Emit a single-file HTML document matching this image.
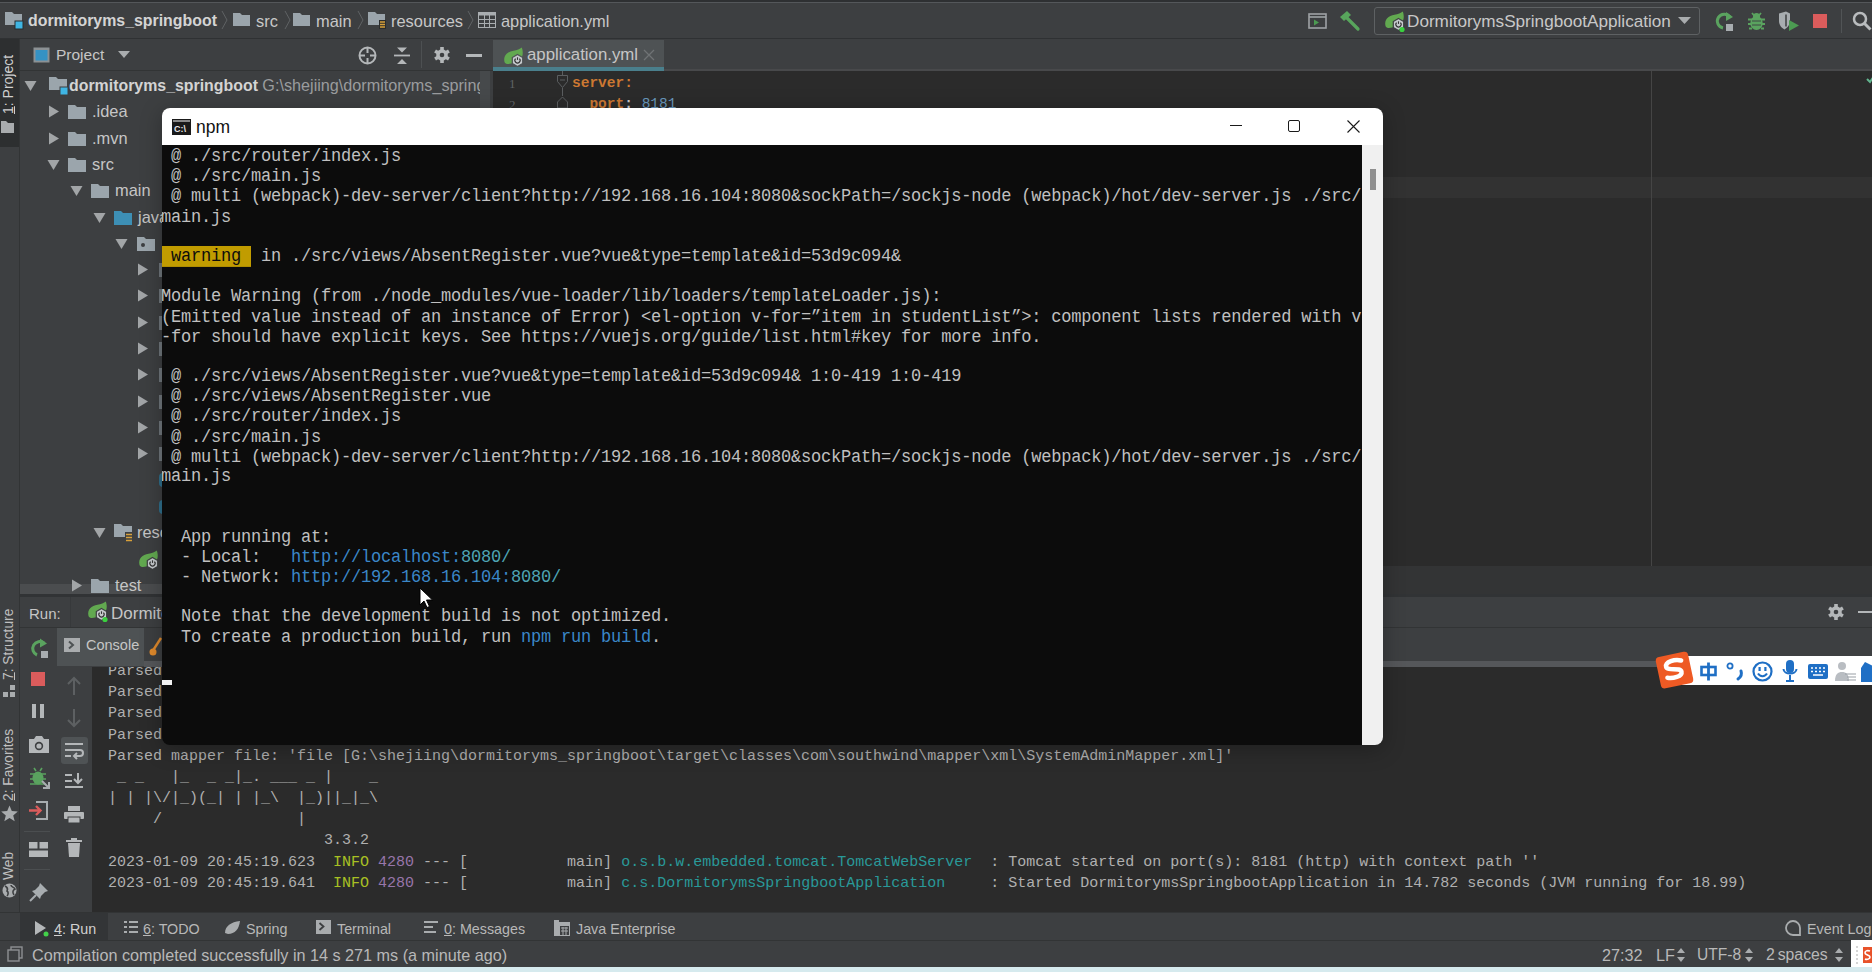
<!DOCTYPE html>
<html><head><meta charset="utf-8">
<style>
*{margin:0;padding:0;box-sizing:border-box}
html,body{width:1872px;height:972px;overflow:hidden;background:#3d3f41;font-family:"Liberation Sans",sans-serif;color:#bbbbbb}
.a{position:absolute}
.ui{font-size:16.4px;white-space:pre;line-height:1}
.mono{font-family:"Liberation Mono",monospace;white-space:pre}
svg{position:absolute;overflow:visible}
.wb{background:#c19c00;color:#0c0c0c}
.lb{color:#3b87c8}
.lc{color:#4ea4b4}
</style></head><body>
<!-- top strip -->
<div class="a" style="left:0;top:0;width:1872px;height:2px;background:#2e3032"></div>
<div class="a" style="left:0;top:2px;width:1872px;height:1px;background:#54575a"></div>
<!-- nav bar -->
<div class="a" id="nav" style="left:0;top:3px;width:1872px;height:35px;background:#3d3f41"></div>
<div class="a" style="left:0;top:38px;width:1872px;height:1px;background:#2f3133"></div>
<!-- breadcrumb -->
<svg style="left:5px;top:12px" width="20" height="18"><path d="M0 0h7l2 2h8v11H0z" fill="#9ba5ac"/><rect x="10" y="9" width="8" height="8" fill="#3fb5e3" stroke="#2b2d2e" stroke-width="1"/></svg>
<div class="a ui" style="left:28px;top:13px;font-weight:bold;font-size:15.9px;color:#d4d4d4">dormitoryms_springboot</div>
<svg style="left:221px;top:10px" width="8" height="20"><path d="M1 1l5 9l-5 9" fill="none" stroke="#5f6264" stroke-width="1"/></svg>
<svg style="left:233px;top:13px" width="18" height="14"><path d="M0 0h7l2 2h8v11H0z" fill="#9ba5ac"/></svg>
<div class="a ui" style="left:256px;top:13px;color:#c8c8c8">src</div>
<svg style="left:284px;top:10px" width="8" height="20"><path d="M1 1l5 9l-5 9" fill="none" stroke="#5f6264" stroke-width="1"/></svg>
<svg style="left:293px;top:13px" width="18" height="14"><path d="M0 0h7l2 2h8v11H0z" fill="#9ba5ac"/></svg>
<div class="a ui" style="left:316px;top:13px;color:#c8c8c8">main</div>
<svg style="left:357px;top:10px" width="8" height="20"><path d="M1 1l5 9l-5 9" fill="none" stroke="#5f6264" stroke-width="1"/></svg>
<svg style="left:368px;top:12px" width="20" height="18"><path d="M0 0h7l2 2h8v11H0z" fill="#9ba5ac"/><rect x="11" y="8" width="7" height="9" fill="#2b2d2e"/><path d="M12 10h5M12 12.5h5M12 15h5" stroke="#d8a03a" stroke-width="1.5"/></svg>
<div class="a ui" style="left:391px;top:13px;color:#c8c8c8">resources</div>
<svg style="left:467px;top:10px" width="8" height="20"><path d="M1 1l5 9l-5 9" fill="none" stroke="#5f6264" stroke-width="1"/></svg>
<svg style="left:478px;top:12px" width="19" height="16"><rect x="0.5" y="0.5" width="17" height="15" fill="none" stroke="#a9adb0"/><rect x="0.5" y="0.5" width="17" height="3" fill="#a9adb0"/><path d="M0 7.5h18M0 11.5h18M6.5 0v16M11.5 0v16" stroke="#a9adb0"/></svg>
<div class="a ui" style="left:501px;top:13px;color:#c8c8c8">application.yml</div>
<!-- right toolbar -->
<svg style="left:1308px;top:13px" width="19" height="16"><rect x="1" y="1" width="17" height="14" fill="none" stroke="#9ea2a5" stroke-width="1.6"/><path d="M1 4h17" stroke="#9ea2a5" stroke-width="1.6"/><path d="M6 6.5v6l5-3z" fill="#4c9b52"/></svg>
<svg style="left:1339px;top:10px" width="22" height="22"><path d="M1 7l7-6l4 4l-7 6z" fill="#58a55c"/><path d="M8 8l11 11" stroke="#58a55c" stroke-width="3.2" stroke-linecap="round"/></svg>
<div class="a" style="left:1374px;top:7px;width:326px;height:28px;border:1px solid #5e6163;border-radius:3px;background:#3d3f41"></div>
<svg style="left:1384px;top:11px" width="23" height="21"><path d="M1.5 15C0 8.5 4.5 4.5 10.5 3.8C14 3.4 17 2 18.8 0.5C20.5 5 20 10 17 12.5C14 15 9 16.5 5 17C3.5 17 2 16.5 1.5 15z" fill="#62a950"/><path d="M14.5 7.5l5.2 3v6l-5.2 3l-5.2-3v-6z" fill="#c5c9cc" stroke="#3d3f41" stroke-width="1.2"/><path d="M12.6 11.6a2.6 2.6 0 1 0 3.8 0" fill="none" stroke="#333" stroke-width="1.1"/><path d="M14.5 10.3v2.6" stroke="#333" stroke-width="1.1"/><circle cx="18" cy="18.5" r="2.6" fill="#3ad13f"/></svg>
<div class="a ui" style="left:1407px;top:13px;font-size:17.15px;color:#c8c8c8">DormitorymsSpringbootApplication</div>
<svg style="left:1678px;top:17px" width="14" height="8"><path d="M0 0h13l-6.5 7z" fill="#a9acae"/></svg>
<svg style="left:1714px;top:11px" width="22" height="22"><path d="M16 6A7 7 0 1 0 9 17" fill="none" stroke="#5aa35f" stroke-width="3"/><path d="M12 1l7 5l-7 4z" fill="#5aa35f"/><rect x="12" y="13" width="7" height="7" fill="#a8adb0"/></svg>
<svg style="left:1747px;top:11px" width="19" height="20"><path d="M5 2l2.5 3M14 2l-2.5 3M1 8.5h4M14 8.5h4M1 13h4M14 13h4M2 17.5h3M14 17.5h3" stroke="#5aa35f" stroke-width="1.8"/><ellipse cx="9.5" cy="12" rx="6.2" ry="7" fill="#5aa35f"/><circle cx="9.5" cy="5.5" r="3.5" fill="#5aa35f"/><path d="M5 10h9M5 14h9" stroke="#3d3f41" stroke-width="0.9"/></svg>
<svg style="left:1778px;top:11px" width="22" height="20"><path d="M1 2.5L8 0.5L12 2.5V10C12 14 9 17 6.5 18.5C3.5 17 1 14 1 10z" fill="#a8adb0"/><path d="M8 3.5v12" stroke="#3d3f41" stroke-width="1.5"/><path d="M11 9l10 5.5l-10 5.5z" fill="#4c9b52"/></svg>
<div class="a" style="left:1813px;top:14px;width:14px;height:14px;background:#db5c5c"></div>
<div class="a" style="left:1841px;top:9px;width:1px;height:24px;background:#515456"></div>
<svg style="left:1852px;top:11px" width="22" height="20"><circle cx="8" cy="8" r="6" fill="none" stroke="#b9bcbe" stroke-width="2.5"/><path d="M12.5 12.5l6 6" stroke="#b9bcbe" stroke-width="3"/></svg>

<!-- left stripe -->
<div class="a" style="left:0;top:39px;width:19px;height:873px;background:#3d3f41"></div>
<div class="a" style="left:0;top:39px;width:19px;height:108px;background:#2d2f30"></div>
<div class="a" style="left:19px;top:39px;width:1px;height:873px;background:#323435"></div>

<!-- project panel -->
<div class="a" style="left:20px;top:39px;width:473px;height:31px;background:#3d3f41"></div>
<div class="a" style="left:20px;top:70px;width:473px;height:1px;background:#323435"></div>
<div class="a" style="left:20px;top:71px;width:460px;height:513px;background:#3d3f41"></div>
<div class="a" style="left:20px;top:584px;width:473px;height:10px;background:#4b4d4f"></div>
<div class="a" style="left:20px;top:594px;width:1852px;height:3px;background:#313335"></div>
<!-- project header -->
<svg style="left:33px;top:47px" width="18" height="17"><rect x="0.5" y="0.5" width="16" height="15" fill="#8c9194"/><rect x="2.5" y="3" width="12" height="10.5" fill="#3592c4"/></svg>
<div class="a ui" style="left:56px;top:47px;font-size:15.5px;color:#c6c6c6">Project</div>
<svg style="left:118px;top:51px" width="14" height="8"><path d="M0 0h12l-6 7z" fill="#a9acae"/></svg>
<svg style="left:357px;top:45px" width="22" height="22"><circle cx="10.5" cy="10.5" r="8" fill="none" stroke="#b4b7b9" stroke-width="2"/><path d="M10.5 2v6M10.5 13v6M2 10.5h6M13 10.5h6" stroke="#b4b7b9" stroke-width="2"/></svg>
<svg style="left:392px;top:46px" width="20" height="20"><path d="M2 9.5h16" stroke="#b4b7b9" stroke-width="1.8"/><path d="M5 1.5h10l-5 5zM5 18h10l-5-5z" fill="#b4b7b9"/></svg>
<div class="a" style="left:421px;top:41px;width:1px;height:27px;background:#4d5052"></div>
<svg style="left:434px;top:47px" width="17" height="17"><g fill="#b4b7b9"><circle cx="8" cy="8" r="5.8"/><rect x="6.2" y="0" width="3.6" height="16"/><rect x="6.2" y="0" width="3.6" height="16" transform="rotate(60 8 8)"/><rect x="6.2" y="0" width="3.6" height="16" transform="rotate(120 8 8)"/></g><circle cx="8" cy="8" r="2.3" fill="#3d3f41"/></svg>
<div class="a" style="left:466px;top:54px;width:16px;height:3px;background:#b4b7b9"></div>
<!-- tree -->
<svg style="left:24px;top:80px" width="14" height="12"><path d="M0.5 1h12l-6 10z" fill="#a2a5a7"/></svg>
<svg style="left:49px;top:77px" width="22" height="20"><path d="M0 0h7l2 2h9v11H0z" fill="#9ba5ac"/><rect x="11" y="10" width="8" height="8" fill="#3fb5e3" stroke="#3d3f41" stroke-width="1"/></svg>
<div class="a ui" style="left:69px;top:77px;font-weight:bold;font-size:15.9px;color:#d4d4d4">dormitoryms_springboot <span style="font-weight:normal;font-size:16.2px;color:#9a9c9e">G:\shejiing\dormitoryms_springboot</span></div>
<svg style="left:48px;top:105px" width="12" height="14"><path d="M1 0.5v12l10-6z" fill="#a2a5a7"/></svg>
<svg style="left:68px;top:105px" width="20" height="16"><path d="M0 0h7l2 2h9v12H0z" fill="#9ba5ac"/></svg>
<div class="a ui" style="left:92px;top:103px;color:#c6c6c6">.idea</div>
<svg style="left:48px;top:132px" width="12" height="14"><path d="M1 0.5v12l10-6z" fill="#a2a5a7"/></svg>
<svg style="left:68px;top:132px" width="20" height="16"><path d="M0 0h7l2 2h9v12H0z" fill="#9ba5ac"/></svg>
<div class="a ui" style="left:92px;top:130px;color:#c6c6c6">.mvn</div>
<svg style="left:47px;top:159px" width="14" height="12"><path d="M0.5 1h12l-6 10z" fill="#a2a5a7"/></svg>
<svg style="left:68px;top:158px" width="20" height="16"><path d="M0 0h7l2 2h9v12H0z" fill="#9ba5ac"/></svg>
<div class="a ui" style="left:92px;top:156px;color:#c6c6c6">src</div>
<svg style="left:70px;top:185px" width="14" height="12"><path d="M0.5 1h12l-6 10z" fill="#a2a5a7"/></svg>
<svg style="left:91px;top:184px" width="20" height="16"><path d="M0 0h7l2 2h9v12H0z" fill="#9ba5ac"/></svg>
<div class="a ui" style="left:115px;top:182px;color:#c6c6c6">main</div>
<svg style="left:93px;top:212px" width="14" height="12"><path d="M0.5 1h12l-6 10z" fill="#a2a5a7"/></svg>
<svg style="left:114px;top:211px" width="20" height="16"><path d="M0 0h7l2 2h9v12H0z" fill="#3d8fb5"/></svg>
<div class="a ui" style="left:138px;top:209px;color:#c6c6c6">java</div>
<svg style="left:115px;top:238px" width="14" height="12"><path d="M0.5 1h12l-6 10z" fill="#a2a5a7"/></svg>
<svg style="left:137px;top:237px" width="20" height="16"><path d="M0 0h7l2 2h9v12H0z" fill="#9ba5ac"/><circle cx="6" cy="8" r="2" fill="#3d3f41"/></svg>
<svg style="left:137px;top:263px" width="12" height="14"><path d="M1 0.5v12l10-6z" fill="#a2a5a7"/></svg>
<div class="a" style="left:159px;top:263px;width:4px;height:14px;background:#6f767b"></div>
<svg style="left:137px;top:289px" width="12" height="14"><path d="M1 0.5v12l10-6z" fill="#a2a5a7"/></svg>
<div class="a" style="left:159px;top:289px;width:4px;height:14px;background:#6f767b"></div>
<svg style="left:137px;top:316px" width="12" height="14"><path d="M1 0.5v12l10-6z" fill="#a2a5a7"/></svg>
<div class="a" style="left:159px;top:316px;width:4px;height:14px;background:#6f767b"></div>
<svg style="left:137px;top:342px" width="12" height="14"><path d="M1 0.5v12l10-6z" fill="#a2a5a7"/></svg>
<div class="a" style="left:159px;top:342px;width:4px;height:14px;background:#6f767b"></div>
<svg style="left:137px;top:368px" width="12" height="14"><path d="M1 0.5v12l10-6z" fill="#a2a5a7"/></svg>
<div class="a" style="left:159px;top:368px;width:4px;height:14px;background:#6f767b"></div>
<svg style="left:137px;top:395px" width="12" height="14"><path d="M1 0.5v12l10-6z" fill="#a2a5a7"/></svg>
<div class="a" style="left:159px;top:395px;width:4px;height:14px;background:#6f767b"></div>
<svg style="left:137px;top:421px" width="12" height="14"><path d="M1 0.5v12l10-6z" fill="#a2a5a7"/></svg>
<div class="a" style="left:159px;top:421px;width:4px;height:14px;background:#6f767b"></div>
<svg style="left:137px;top:447px" width="12" height="14"><path d="M1 0.5v12l10-6z" fill="#a2a5a7"/></svg>
<div class="a" style="left:159px;top:447px;width:4px;height:14px;background:#6f767b"></div>
<div class="a" style="left:159px;top:473px;width:4px;height:14px;border-radius:7px 0 0 7px;background:#2f6f8c"></div>
<div class="a" style="left:159px;top:500px;width:4px;height:14px;border-radius:7px 0 0 7px;background:#2f6f8c"></div>
<svg style="left:93px;top:527px" width="14" height="12"><path d="M0.5 1h12l-6 10z" fill="#a2a5a7"/></svg>
<svg style="left:114px;top:524px" width="22" height="20"><path d="M0 0h7l2 2h9v11H0z" fill="#9ba5ac"/><rect x="11" y="8" width="8" height="11" fill="#3d3f41"/><path d="M12 10.5h6M12 13.5h6M12 16.5h6" stroke="#d8a03a" stroke-width="1.6"/></svg>
<div class="a ui" style="left:137px;top:524px;color:#c6c6c6">resources</div>
<svg style="left:138px;top:550px" width="23" height="21"><path d="M1.5 15C0 8.5 4.5 4.5 10.5 3.8C14 3.4 17 2 18.8 0.5C20.5 5 20 10 17 12.5C14 15 9 16.5 5 17C3.5 17 2 16.5 1.5 15z" fill="#62a950"/><path d="M14.5 7.5l5.2 3v6l-5.2 3l-5.2-3v-6z" fill="#c5c9cc" stroke="#3d3f41" stroke-width="1.2"/><path d="M12.6 11.6a2.6 2.6 0 1 0 3.8 0" fill="none" stroke="#333" stroke-width="1.1"/><path d="M14.5 10.3v2.6" stroke="#333" stroke-width="1.1"/></svg>
<svg style="left:71px;top:579px" width="12" height="14"><path d="M1 0.5v12l10-6z" fill="#a2a5a7"/></svg>
<svg style="left:91px;top:579px" width="20" height="16"><path d="M0 0h7l2 2h9v12H0z" fill="#9ba5ac"/></svg>
<div class="a ui" style="left:115px;top:577px;color:#c6c6c6">test</div>
<div class="a" style="left:480px;top:71px;width:13px;height:513px;background:#3d3f41"></div>
<div class="a" style="left:480px;top:71px;width:10px;height:513px;background:#46494b"></div>
<!-- editor -->
<div class="a" style="left:493px;top:39px;width:1379px;height:32px;background:#3d3f41"></div>
<div class="a" style="left:493px;top:40px;width:171px;height:31px;background:#4e5254"></div>
<div class="a" style="left:493px;top:67px;width:171px;height:4px;background:#4a7f8c"></div>
<div class="a" style="left:493px;top:71px;width:1379px;height:495px;background:#2b2b2b"></div>
<div class="a" style="left:493px;top:177px;width:1379px;height:21px;background:#323232"></div>
<div class="a" style="left:1651px;top:71px;width:1px;height:495px;background:#454545"></div>
<div class="a" style="left:493px;top:566px;width:1379px;height:28px;background:#333435"></div>

<div class="a" style="left:664px;top:69px;width:1208px;height:2px;background:#48494b"></div>
<svg style="left:1867px;top:75px" width="6" height="8"><path d="M0 4l3 3l4-6" fill="none" stroke="#62b58f" stroke-width="2"/></svg>
<!-- tab -->
<svg style="left:503px;top:47px" width="23" height="21"><path d="M1.5 15C0 8.5 4.5 4.5 10.5 3.8C14 3.4 17 2 18.8 0.5C20.5 5 20 10 17 12.5C14 15 9 16.5 5 17C3.5 17 2 16.5 1.5 15z" fill="#62a950"/><path d="M14.5 7.5l5.2 3v6l-5.2 3l-5.2-3v-6z" fill="#c5c9cc" stroke="#4e5254" stroke-width="1.2"/><path d="M12.6 11.6a2.6 2.6 0 1 0 3.8 0" fill="none" stroke="#333" stroke-width="1.1"/><path d="M14.5 10.3v2.6" stroke="#333" stroke-width="1.1"/></svg>
<div class="a ui" style="left:527px;top:47px;font-size:16.8px;color:#c6c6c6">application.yml</div>
<svg style="left:643px;top:49px" width="12" height="12"><path d="M1 1l10 10M11 1L1 11" stroke="#6f7375" stroke-width="1.3"/></svg>
<!-- editor content -->
<div class="a mono" style="left:509px;top:75px;font-family:'Liberation Serif',serif;font-size:13px;line-height:21px;color:#606366;margin-top:-2px">1
2</div>
<svg style="left:556px;top:71px" width="14" height="40"><path d="M6.5 0v4" stroke="#5b5e60"/><path d="M1.5 4.5h10v6l-5 6l-5-6z" fill="none" stroke="#5b5e60"/><path d="M4 9h5" stroke="#5b5e60"/><path d="M6.5 17v8" stroke="#5b5e60"/><path d="M1.5 37v-6l5-5l5 5v6z" fill="none" stroke="#5b5e60"/></svg>
<div class="a mono" style="left:572px;top:73px;font-size:14.5px;line-height:21px;font-weight:bold;color:#cc7832">server<span style="color:#cc7832">:</span>
  port<span style="color:#cccccc">:</span> <span style="font-weight:normal;color:#6897bb">8181</span></div>

<!-- run panel -->
<div class="a" style="left:20px;top:597px;width:1852px;height:30px;background:#3d3f41"></div>
<div class="a" style="left:20px;top:627px;width:1852px;height:1px;background:#323435"></div>
<div class="a" style="left:20px;top:628px;width:1852px;height:284px;background:#3d3f41"></div>
<div class="a" style="left:57px;top:628px;width:87px;height:38px;background:#4e5254"></div>
<div class="a" style="left:144px;top:661px;width:1728px;height:6px;background:#55575a"></div>
<div class="a" style="left:92px;top:667px;width:1780px;height:245px;background:#2b2b2b"></div>

<!-- bottom tool bar & status -->
<div class="a" style="left:0;top:912px;width:1872px;height:28px;background:#3d3f41;border-top:1px solid #323435"></div>
<div class="a" style="left:20px;top:913px;width:88px;height:27px;background:#333537"></div>
<div class="a" style="left:0;top:940px;width:1872px;height:27px;background:#3d3f41;border-top:1px solid #323435"></div>
<div class="a" style="left:0;top:967px;width:1872px;height:5px;background:#d6eaee"></div>
<div class="a" style="left:1851px;top:940px;width:21px;height:27px;background:#ffffff"></div>

<!-- run content -->
<div class="a ui" style="left:29px;top:606px;font-size:15px;color:#c6c6c6">Run:</div>
<div class="a" style="left:70px;top:597px;width:1px;height:30px;background:#37393b"></div>
<svg style="left:87px;top:601px" width="23" height="21"><path d="M1.5 15C0 8.5 4.5 4.5 10.5 3.8C14 3.4 17 2 18.8 0.5C20.5 5 20 10 17 12.5C14 15 9 16.5 5 17C3.5 17 2 16.5 1.5 15z" fill="#62a950"/><path d="M14.5 7.5l5.2 3v6l-5.2 3l-5.2-3v-6z" fill="#c5c9cc" stroke="#3d3f41" stroke-width="1.2"/><path d="M12.6 11.6a2.6 2.6 0 1 0 3.8 0" fill="none" stroke="#333" stroke-width="1.1"/><path d="M14.5 10.3v2.6" stroke="#333" stroke-width="1.1"/><circle cx="18" cy="18.5" r="2.6" fill="#3ad13f"/></svg>
<div class="a ui" style="left:111px;top:605px;font-size:17px;color:#c6c6c6">DormitorymsSpringbootApplication</div>
<svg style="left:64px;top:638px" width="17" height="15"><rect x="0" y="0" width="16" height="14" fill="#a9acae"/><path d="M5 3.5l4 3.5l-4 3.5" fill="none" stroke="#4e5254" stroke-width="2"/></svg>
<div class="a ui" style="left:86px;top:638px;font-size:14.5px;color:#c6c6c6">Console</div>
<svg style="left:148px;top:636px" width="16" height="22"><path d="M4 16L13 2" stroke="#e08a2c" stroke-width="2.4"/><circle cx="5" cy="16" r="3.5" fill="#e08a2c"/></svg>
<svg style="left:29px;top:638px" width="22" height="22"><path d="M15 5A7 7 0 1 0 8 17" fill="none" stroke="#5aa35f" stroke-width="3"/><path d="M11 0.5l7 5l-7 4z" fill="#5aa35f"/><rect x="12" y="13" width="7" height="7" fill="#a8adb0"/></svg>
<div class="a" style="left:31px;top:672px;width:14px;height:14px;background:#db5c5c"></div>
<div class="a" style="left:32px;top:704px;width:4px;height:14px;background:#b4b7b9"></div><div class="a" style="left:40px;top:704px;width:4px;height:14px;background:#b4b7b9"></div>
<svg style="left:29px;top:736px" width="20" height="18"><path d="M0 3h5l2-3h6l2 3h5v14H0z" fill="#b4b7b9"/><circle cx="10" cy="10" r="4.2" fill="#3d3f41"/><circle cx="10" cy="10" r="2.6" fill="#b4b7b9"/></svg>
<svg style="left:29px;top:767px" width="22" height="22"><ellipse cx="9" cy="11" rx="5.5" ry="6.5" fill="#5aa35f"/><path d="M1 7h16M1 12h16M1 17h16M5 1l2 3M13 1l-2 3" stroke="#5aa35f" stroke-width="1.6"/><path d="M13 14l7 7M20 15v6h-6" stroke="#a8adb0" stroke-width="2" fill="none"/></svg>
<svg style="left:28px;top:800px" width="22" height="22"><path d="M8 2h11v17H8" fill="none" stroke="#a8adb0" stroke-width="2"/><path d="M1 10.5h10M8 6l4.5 4.5L8 15" fill="none" stroke="#db5c5c" stroke-width="2.4"/></svg>
<div class="a" style="left:24px;top:831px;width:26px;height:1px;background:#4b4e50"></div>
<svg style="left:29px;top:842px" width="20" height="16"><rect x="0" y="0" width="8.5" height="6.5" fill="#b4b7b9"/><rect x="10.5" y="0" width="8.5" height="6.5" fill="#b4b7b9"/><rect x="0" y="8.5" width="19" height="6.5" fill="#b4b7b9"/></svg>
<div class="a" style="left:24px;top:869px;width:26px;height:1px;background:#4b4e50"></div>
<svg style="left:29px;top:880px" width="22" height="22"><path d="M11 3l8 8l-3 1l-4 4l-1 3l-8-8l3-1l4-4z" fill="#a8adb0"/><path d="M7 15l-6 6" stroke="#a8adb0" stroke-width="2"/></svg>
<svg style="left:66px;top:676px" width="16" height="20"><path d="M8 19V2M2 8l6-6l6 6" fill="none" stroke="#5d6062" stroke-width="2"/></svg>
<svg style="left:66px;top:708px" width="16" height="20"><path d="M8 1v17M2 12l6 6l6-6" fill="none" stroke="#5d6062" stroke-width="2"/></svg>
<div class="a" style="left:61px;top:737px;width:27px;height:27px;border-radius:3px;background:#4f5355"></div>
<svg style="left:64px;top:741px" width="22" height="20"><path d="M1 3h18M1 9h15a3 3 0 0 1 0 6h-5" fill="none" stroke="#b4b7b9" stroke-width="2"/><path d="M13 12l-3 3l3 3" fill="none" stroke="#b4b7b9" stroke-width="2"/><path d="M1 15h6" stroke="#b4b7b9" stroke-width="2"/></svg>
<svg style="left:64px;top:772px" width="22" height="20"><path d="M1 3h7M1 9h7M1 15h18M14 1v10M10 7l4 4l4-4" fill="none" stroke="#b4b7b9" stroke-width="2"/></svg>
<svg style="left:64px;top:806px" width="20" height="18"><rect x="4" y="0" width="12" height="5" fill="#b4b7b9"/><rect x="0" y="6" width="20" height="7" rx="1" fill="#b4b7b9"/><rect x="4" y="11" width="12" height="6" fill="#b4b7b9" stroke="#3d3f41" stroke-width="1"/></svg>
<svg style="left:66px;top:838px" width="18" height="20"><rect x="0" y="2" width="16" height="2" fill="#b4b7b9"/><rect x="5" y="0" width="6" height="2" fill="#b4b7b9"/><path d="M2 5h12l-1 14H3z" fill="#b4b7b9"/></svg>
<div class="a" style="left:92px;top:667px;width:1780px;height:245px;overflow:hidden">
<pre class="a mono" style="left:16px;top:-6px;font-size:15px;line-height:21.17px;color:#b0b0b0">Parsed
Parsed
Parsed
Parsed
Parsed mapper file: 'file [G:\shejiing\dormitoryms_springboot\target\classes\com\southwind\mapper\xml\SystemAdminMapper.xml]'
 _ _   |_  _ _|_. ___ _ |    _ 
| | |\/|_)(_| | |_\  |_)||_|_\ 
     /               |         
                        3.3.2 
2023-01-09 20:45:19.623  <span style="color:#a8c023">INFO</span> <span style="color:#9876aa">4280</span> --- [           main] <span style="color:#299999">o.s.b.w.embedded.tomcat.TomcatWebServer</span>  : Tomcat started on port(s): 8181 (http) with context path ''
2023-01-09 20:45:19.641  <span style="color:#a8c023">INFO</span> <span style="color:#9876aa">4280</span> --- [           main] <span style="color:#299999">c.s.DormitorymsSpringbootApplication</span>     : Started DormitorymsSpringbootApplication in 14.782 seconds (JVM running for 18.99)</pre></div>
<svg style="left:35px;top:921px" width="14" height="16"><path d="M0 0v14l11-7z" fill="#b4b7b9"/><circle cx="11" cy="13" r="2.5" fill="#43d14a"/></svg>
<div class="a ui" style="left:54px;top:922px;font-size:14.3px;color:#d0d0d0"><u>4</u>: Run</div>
<svg style="left:124px;top:921px" width="14" height="13"><path d="M0 1h3M0 6h3M0 11h3M5 1h9M5 6h9M5 11h9" stroke="#a9acae" stroke-width="2"/></svg>
<div class="a ui" style="left:143px;top:922px;font-size:14.3px;color:#b8b8b8"><u>6</u>: TODO</div>
<svg style="left:224px;top:920px" width="17" height="15"><path d="M1 13C1 6 7 2 16 1c-1 8-5 13-12 13z" fill="#a9acae"/></svg>
<div class="a ui" style="left:246px;top:922px;font-size:14.3px;color:#b8b8b8">Spring</div>
<svg style="left:316px;top:920px" width="15" height="15"><rect x="0" y="0" width="15" height="14" fill="#a9acae"/><path d="M3.5 3l4 3.5l-4 3.5" fill="none" stroke="#3d3f41" stroke-width="1.8"/></svg>
<div class="a ui" style="left:337px;top:922px;font-size:14.3px;color:#b8b8b8">Terminal</div>
<svg style="left:424px;top:921px" width="14" height="13"><path d="M0 1h14M0 6h9M0 11h12" stroke="#a9acae" stroke-width="2"/></svg>
<div class="a ui" style="left:444px;top:922px;font-size:14.3px;color:#b8b8b8"><u>0</u>: Messages</div>
<svg style="left:554px;top:919px" width="16" height="17"><path d="M0 1h5v2h11v14H0z" fill="#a9acae"/><rect x="6" y="7" width="9" height="9" fill="#3d3f41"/><path d="M7 9h7M7 12h7M9 8v8M12 8v8" stroke="#a9acae"/></svg>
<div class="a ui" style="left:576px;top:922px;font-size:14.3px;color:#b8b8b8">Java Enterprise</div>
<svg style="left:1785px;top:920px" width="16" height="16"><path d="M8 1a7 7 0 1 0 0 14h7V8A7 7 0 0 0 8 1z" fill="none" stroke="#a9acae" stroke-width="1.8"/></svg>
<div class="a ui" style="left:1807px;top:922px;font-size:14.3px;color:#b8b8b8">Event Log</div>
<svg style="left:7px;top:946px" width="16" height="16"><rect x="4" y="1" width="11" height="11" fill="none" stroke="#8e9193" stroke-width="1.4"/><rect x="1" y="4" width="11" height="11" fill="#3d3f41" stroke="#8e9193" stroke-width="1.4"/></svg>
<div class="a ui" style="left:32px;top:947px;font-size:16.2px;color:#b8b8b8">Compilation completed successfully in 14 s 271 ms (a minute ago)</div>
<div class="a ui" style="left:1602px;top:947px;font-size:16.2px;color:#b8b8b8">27:32</div>
<div class="a ui" style="left:1656px;top:947px;font-size:16.2px;color:#b8b8b8">LF</div>
<svg style="left:1677px;top:948px" width="8" height="14"><path d="M0 5l4-5l4 5zM0 9l4 5l4-5z" fill="#a9acae"/></svg>
<div class="a ui" style="left:1697px;top:947px;font-size:15.6px;color:#b8b8b8">UTF-8</div>
<svg style="left:1745px;top:948px" width="8" height="14"><path d="M0 5l4-5l4 5zM0 9l4 5l4-5z" fill="#a9acae"/></svg>
<div class="a ui" style="left:1766px;top:947px;font-size:15.8px;word-spacing:-1.5px;color:#b8b8b8">2 spaces</div>
<svg style="left:1835px;top:948px" width="8" height="14"><path d="M0 5l4-5l4 5zM0 9l4 5l4-5z" fill="#a9acae"/></svg>
<svg style="left:1855px;top:944px" width="20" height="22"><path d="M2 2v18" stroke="#c8c8c8" stroke-width="1.5" stroke-dasharray="2 2"/><path d="M8 3h10v16H8z" fill="#e8522a"/><path d="M15 7c-3-1-5 0-5 2c0 2 5 2 5 4c0 2-3 3-5 2" fill="none" stroke="#fff" stroke-width="1.6"/></svg>
<!-- stripe -->
<div class="a ui" style="left:0px;top:114px;font-size:14px;line-height:16px;color:#d0d0d0;transform:rotate(-90deg);transform-origin:0 0"><u>1</u>: Project</div>
<svg style="left:1px;top:121px" width="14" height="12"><path d="M0 0h5l2 2h6v10H0z" fill="#a9acae"/></svg>
<div class="a ui" style="left:1px;top:680px;font-size:13.8px;line-height:16px;color:#c0c0c0;transform:rotate(-90deg);transform-origin:0 0"><u>7</u>: Structure</div>
<svg style="left:3px;top:685px" width="13" height="13"><rect x="7" y="0" width="5" height="5" fill="#a9acae"/><rect x="0" y="7" width="5" height="5" fill="#a9acae"/><rect x="7" y="7" width="5" height="5" fill="#a9acae"/></svg>
<div class="a ui" style="left:1px;top:801px;font-size:13.8px;line-height:16px;color:#c0c0c0;transform:rotate(-90deg);transform-origin:0 0"><u>2</u>: Favorites</div>
<svg style="left:1px;top:805px" width="17" height="17"><path d="M8.5 0.5l2.3 5.6l6 .4l-4.6 3.9l1.5 5.9l-5.2-3.2l-5.2 3.2l1.5-5.9L0.2 6.5l6-.4z" fill="#a9acae"/></svg>
<div class="a ui" style="left:1px;top:880px;font-size:13.8px;line-height:16px;color:#c0c0c0;transform:rotate(-90deg);transform-origin:0 0">Web</div>
<svg style="left:2px;top:883px" width="16" height="16"><circle cx="7.5" cy="7.5" r="7" fill="#a9acae"/><path d="M3 3c2 1 3 3 2 5c2 1 1 4 0 5M9 2c0 2 3 2 4 4c-2 1-3 3-1 6" fill="none" stroke="#3d3f41" stroke-width="1.6"/></svg>
<svg style="left:1828px;top:604px" width="17" height="17"><g fill="#b4b7b9"><circle cx="8" cy="8" r="5.8"/><rect x="6.2" y="0" width="3.6" height="16"/><rect x="6.2" y="0" width="3.6" height="16" transform="rotate(60 8 8)"/><rect x="6.2" y="0" width="3.6" height="16" transform="rotate(120 8 8)"/></g><circle cx="8" cy="8" r="2.3" fill="#3d3f41"/></svg>
<div class="a" style="left:1858px;top:611px;width:14px;height:2px;background:#b4b7b9"></div>
<div class="a" style="left:1677px;top:656px;width:195px;height:29px;background:#ffffff"></div>
<svg style="left:1655px;top:650px" width="40" height="40"><g transform="rotate(-12 20 20)"><rect x="3" y="4" width="33" height="32" rx="4" fill="#ee5a24"/><path d="M28 12c-6-3-16-2-16 3c0 5 14 3 14 8c0 5-10 5-15 3" fill="none" stroke="#fff" stroke-width="4.5" stroke-linecap="round"/></g></svg>
<svg style="left:1700px;top:662px" width="18" height="20"><rect x="1.5" y="5" width="14" height="8" fill="none" stroke="#1f6fc5" stroke-width="2.6"/><path d="M8.5 0.5v18" stroke="#1f6fc5" stroke-width="2.8"/></svg>
<svg style="left:1726px;top:662px" width="20" height="18"><circle cx="4" cy="4" r="2.6" fill="none" stroke="#1f6fc5" stroke-width="1.8"/><path d="M15 9c1 3 0 6-3 8" stroke="#1f6fc5" stroke-width="3" fill="none" stroke-linecap="round"/></svg>
<svg style="left:1752px;top:661px" width="21" height="21"><circle cx="10.5" cy="10.5" r="9" fill="none" stroke="#1f6fc5" stroke-width="2.2"/><rect x="6.5" y="6" width="2.2" height="4" fill="#1f6fc5"/><rect x="12.3" y="6" width="2.2" height="4" fill="#1f6fc5"/><path d="M6 12.5c2 3.5 7 3.5 9 0" fill="none" stroke="#1f6fc5" stroke-width="2"/></svg>
<svg style="left:1782px;top:660px" width="16" height="23"><rect x="4" y="0" width="8" height="13" rx="4" fill="#1f6fc5"/><path d="M1.5 9c0 6 13 6 13 0M8 15v5M4 21h8" fill="none" stroke="#1f6fc5" stroke-width="2"/></svg>
<svg style="left:1808px;top:664px" width="21" height="16"><rect x="0" y="0" width="20" height="15" rx="2" fill="#1f6fc5"/><path d="M3 4h2M7 4h2M11 4h2M15 4h2M3 7.5h2M7 7.5h2M11 7.5h2M15 7.5h2M5 11h10" stroke="#fff" stroke-width="1.7"/></svg>
<svg style="left:1835px;top:661px" width="22" height="22"><circle cx="7" cy="5" r="4" fill="#b9bdc2"/><path d="M0 20c0-7 3-9 7-9s7 2 7 9z" fill="#b9bdc2"/><path d="M10 13h11M12 16h9M12 19h9" stroke="#9aa0a6" stroke-width="1.2"/></svg>
<svg style="left:1861px;top:662px" width="14" height="22"><path d="M4 0l8 4v16H0V6z" fill="#1f6fc5"/></svg>
<!-- npm window -->
<div class="a" id="npm" style="left:162px;top:108px;width:1221px;height:637px;border-radius:8px;overflow:hidden;background:#0c0c0c;box-shadow:0 4px 22px rgba(0,0,0,0.28)">
  <div class="a" style="left:0;top:0;width:1221px;height:37px;background:#ffffff"></div>
  <svg style="left:10px;top:11px" width="19" height="16"><rect x="0" y="0" width="19" height="16" fill="#1a1a1a"/><rect x="1" y="1" width="17" height="2" fill="#8a8a8a"/><text x="2" y="13" font-family="Liberation Sans" font-size="9" font-weight="bold" fill="#e8e8e8">C:\</text></svg>
  <div class="a ui" style="left:34px;top:10.5px;font-size:17.5px;color:#111">npm</div>
  <div class="a" style="left:1068px;top:17px;width:12px;height:1px;background:#1a1a1a"></div>
  <div class="a" style="left:1126px;top:12px;width:12px;height:12px;border:1px solid #1a1a1a;border-radius:2px"></div>
  <svg style="left:1185px;top:12px" width="13" height="13"><path d="M0.5 0.5l12 12M12.5 0.5l-12 12" stroke="#1a1a1a" stroke-width="1.1"/></svg>
  <pre class="a mono" id="con" style="left:-1px;top:39px;font-size:17px;letter-spacing:-0.2px;line-height:18.1818px;color:#c0c0c0;transform:scaleY(1.1);transform-origin:0 0"> @ ./src/router/index.js
 @ ./src/main.js
 @ multi (webpack)-dev-server/client?http://192.168.16.104:8080&amp;sockPath=/sockjs-node (webpack)/hot/dev-server.js ./src/
main.js

<span class="wb"> warning </span> in ./src/views/AbsentRegister.vue?vue&amp;type=template&amp;id=53d9c094&amp;

Module Warning (from ./node_modules/vue-loader/lib/loaders/templateLoader.js):
(Emitted value instead of an instance of Error) &lt;el-option v-for=”item in studentList”&gt;: component lists rendered with v
-for should have explicit keys. See https://vuejs.org/guide/list.html#key for more info.

 @ ./src/views/AbsentRegister.vue?vue&amp;type=template&amp;id=53d9c094&amp; 1:0-419 1:0-419
 @ ./src/views/AbsentRegister.vue
 @ ./src/router/index.js
 @ ./src/main.js
 @ multi (webpack)-dev-server/client?http://192.168.16.104:8080&amp;sockPath=/sockjs-node (webpack)/hot/dev-server.js ./src/
main.js


  App running at:
  - Local:   <span class="lb">http://localhost:</span><span class="lc">8080/</span>
  - Network: <span class="lb">http://192.168.16.104:</span><span class="lc">8080/</span>

  Note that the development build is not optimized.
  To create a production build, run <span class="lb">npm run build</span>.</pre>
  <div class="a" style="left:0;top:572px;width:10px;height:5px;background:#f2f2f2"></div>
  <div class="a" style="left:1200px;top:37px;width:21px;height:600px;background:#f0f0f0"></div>
  <div class="a" style="left:1208px;top:61px;width:6px;height:21px;background:#8f8f8f"></div>
</div>
<svg style="left:419px;top:587px" width="14" height="22"><path d="M1 1v17l4-4l3 6.5l2.5-1l-3-6.5h6z" fill="#fff" stroke="#000" stroke-width="1"/></svg>
</body></html>
